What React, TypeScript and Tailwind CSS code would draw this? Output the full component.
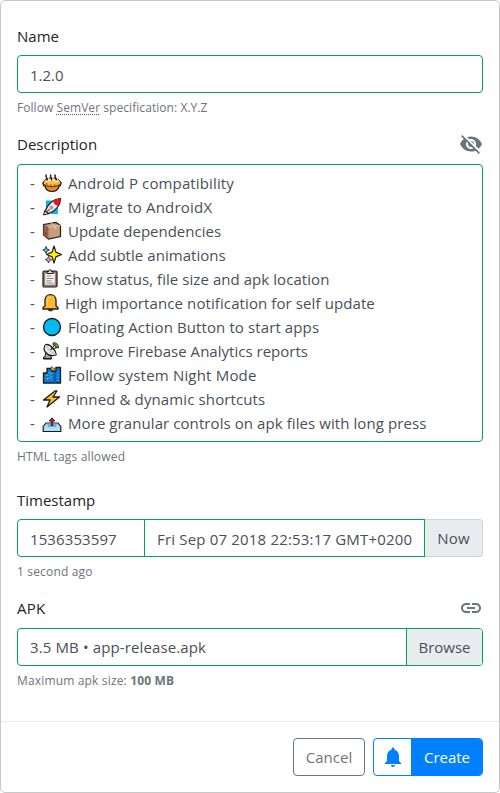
import React from 'react';

const O = '#1c1c1c';

const Pie = () => (
  <>
    <path d="M1 9.500h18c.3 2.500-.8 3.500-2 4-1 3.500-3.500 5-7 5s-6-1.500-7-5C1.800 13 .7 12 1 9.500z" fill="#f08518" stroke={O} strokeWidth="1.200" />
    <path d="M1.300 10.500C1.500 6.500 5 5 10 5s8.500 1.500 8.700 5.500c-2 4-15.400 4-17.400 0z" fill="#ffc23d" stroke={O} strokeWidth=".9" />
    <path d="M4 8.500c3-2 9-2 12 0" fill="none" stroke="#fff0c0" strokeWidth="2" />
    <path d="M4 11h1.500M8 12h1.500M12 12h1.500M15.500 11h.8" stroke="#d8421c" strokeWidth="1.400" />
    <path d="M5 7.500c1-2-1.800-3-.8-6M9.500 7.500c1-2-1.800-3-.8-6M14 7.500c1-2-1.800-3-.8-6" fill="none" stroke={O} strokeWidth="1.500" />
    <path d="M6.500 6.500c.6-1.500-1.300-2.500-.6-4.500M11 6.500c.6-1.500-1.300-2.500-.6-4.500M15.500 6.500c.6-1.500-1.300-2.500-.6-4.500" stroke="#fff" fill="none" strokeWidth="1" />
  </>
);

const RocketArt = () => (
  <>
    <path d="M4 3.500h8L16 8v9H9L4 11z" fill="#08b5ef" />
    <path d="M1.500 18L3 13l4.500 3.500z" fill="#d9d9d9" stroke={O} />
    <path d="M3.500 14C4.500 9 10.500 2 18.500 1.500 18.500 9 12.500 14.500 6.500 16.500z" fill="#efefef" stroke={O} strokeWidth="1.200" />
    <path d="M11.200 4.200c2.200-1.600 4.600-2.500 7.300-2.700-.1 2.800-1.100 5.200-2.900 7.300-2.200-.6-3.800-2.200-4.400-4.600z" fill="#e81123" />
    <circle cx="9.500" cy="10.500" r="1.500" fill="#aaa" stroke="#777" strokeWidth=".6" />
    <path d="M5 14.800l2.800-2.800" stroke="#e8401c" strokeWidth="1.400" />
  </>
);

const Box = () => (
  <>
    <path d="M1.500 3.500L14 1.500l4.500 3v11L6.500 18 1.500 14z" fill="#c69c7b" stroke={O} strokeWidth="1.200" />
    <path d="M1.500 3.500l5 2.500v12l-5-4z" fill="#8e6548" />
    <path d="M6.500 6l12-1.500" stroke="#e6c5a8" />
    <path d="M8 2.600l4.300 2.600v3l2-.3V5l-4-2.700z" fill="#d6bda8" />
    <path d="M3 11l1.500 1.200v2L3 13z" fill="#e81123" />
    <path d="M12 14.500l4-1v1.500l-4 1z" fill="#b0a69d" />
  </>
);

const Sparkles = () => (
  <>
    <path d="M12 1l1.900 6.100 5.600 2.400-5.600 2.400L12 18l-1.900-6.100-5.600-2.400 5.600-2.400z" fill="#fff100" stroke={O} strokeWidth="1.200" strokeLinejoin="round" />
    <path d="M4 1.500l1 2.500 2.500 1L5 6 4 8.500 3 6 .8 5 3 4z" fill="#35cdf5" stroke={O} strokeWidth=".8" />
    <path d="M6.500 11.500l1 2.200 2.200 1-2.200 1-1 2.300-1-2.300-2.200-1 2.200-1z" fill="#f4a0d5" stroke={O} strokeWidth=".8" />
  </>
);

const Clipboard = () => (
  <>
    <rect x="1" y="2" width="14" height="16" rx="1.200" fill="#a97b5a" stroke={O} strokeWidth="1.200" />
    <path d="M2.800 4h10.400v12H2.800z" fill="#f2f2f2" stroke="#666" strokeWidth=".5" />
    <path d="M5 4.500v-2h1.700C7 0 9 0 9.300 2.500H11v2z" fill="#ddd" stroke={O} />
    <path d="M4.500 7h4.500M4.500 9.500h7M4.500 11.800h5M4.500 14h7" stroke="#8c8c8c" />
  </>
);

const BellArt = () => (
  <>
    <path d="M6.500 15.500c0 3 4 3 4 0" fill="#f9a52b" stroke={O} strokeWidth="1.200" />
    <path d="M3 13V7.500C3 4 5.500 1.700 8.500 1.700S14 4 14 7.500V13l2 1.500V16H1v-1.500z" fill="#ffb92e" stroke={O} strokeWidth="1.300" strokeLinejoin="round" />
    <path d="M5 12V8c0-2 1-3.500 2.500-4" fill="none" stroke="#ffd36b" />
  </>
);

const Circle = () => <circle cx="10" cy="10" r="8.500" fill="#00bcf2" stroke={O} strokeWidth="1.300" />;

const Satellite = () => (
  <>
    <path d="M11 2c3-1 6 1.500 5.500 5l-3-.5c0-1.500-.7-2.300-2.500-2.500z" fill="#719828" stroke={O} strokeWidth=".8" />
    <path d="M4 11l4.500 2 1 5h-8v-2H3z" fill="#a9a9a9" stroke={O} />
    <path d="M3.500 3.500C-.5 9 5 16.500 14 14c.8-3-5-11.500-10.500-10.500z" fill="#e3e3e3" stroke={O} strokeWidth="1.200" />
    <path d="M3.500 3.500C6 8 9.500 12 14 14" fill="none" stroke="#aaa" strokeWidth=".8" />
    <path d="M8.500 8.500l5-5M8.500 8.500l6.500-2" stroke={O} />
    <path d="M1.500 17.500H10" stroke={O} strokeWidth="1.200" />
  </>
);

const NightCity = () => (
  <>
    <path d="M1.500 18V8H5V3.500h5V6h4V2.500h4.500V18z" fill="#0879d5" stroke={O} strokeWidth="1.300" />
    <path d="M12 7h2v11h-3z" fill="#075ea8" />
    <path d="M10 1.500c0 1.500 1.200 2.300 3 1.500.5 2-1.500 3-3 2.300-1.300-.8-1.300-2.800 0-3.800z" fill="#f5d232" stroke={O} strokeWidth=".7" />
    <path d="M4 10v6M7 7v9M10 8v7M16 6v10" stroke="#41c7ef" strokeWidth="1" strokeDasharray="1 2" />
    <path d="M5.500 9.500v7M8.500 8v8" stroke="#f7cd35" strokeWidth="1" strokeDasharray="1 3" />
  </>
);

const Bolt = () => <path d="M13 2L1.500 11H8l-3 7L17.500 8H11l4-6z" fill="#ffb92e" stroke={O} strokeWidth="1.300" strokeLinejoin="round" />;

const Outbox = () => (
  <>
    <path d="M1.200 13.500l2.800-3.500h12l2.800 3.500v5H1.200z" fill="#a9d8f5" stroke={O} strokeWidth="1.200" />
    <path d="M5 10.600h10l-1.200 3.400H6.200z" fill="#62b0e4" />
    <path d="M2 13.700h4c.8 1.800 7.200 1.800 8 0h4v4.200H2z" fill="#b4def6" />
    <path d="M10 13V8" stroke={O} strokeWidth="2.200" />
    <path d="M7.200 8L10 4.800 12.800 8z" fill="#dc1721" stroke={O} strokeWidth=".9" />
    <path d="M10 12.500V7" stroke="#dc1721" strokeWidth="1.200" />
  </>
);

const changes = [
  { art: Pie, gap: 'pl-[26px]', track: 'tracking-[0.13px]', text: 'Android P compatibility' },
  { art: RocketArt, gap: 'pl-[26px]', track: 'tracking-[0.2px]', text: 'Migrate to AndroidX' },
  { art: Box, gap: 'pl-[26px]', track: 'tracking-[0px]', text: 'Update dependencies' },
  { art: Sparkles, gap: 'pl-[26px]', track: 'tracking-[0.05px]', text: 'Add subtle animations' },
  { art: Clipboard, gap: 'pl-[22px]', track: 'tracking-[0.06px]', text: 'Show status, file size and apk location' },
  { art: BellArt, gap: 'pl-[23px]', track: 'tracking-[0.1px]', text: 'High importance notification for self update' },
  { art: Circle, gap: 'pl-[26px]', track: 'tracking-[0.11px]', text: 'Floating Action Button to start apps' },
  { art: Satellite, gap: 'pl-[23px]', track: 'tracking-[0.02px]', text: 'Improve Firebase Analytics reports' },
  { art: NightCity, gap: 'pl-[26px]', track: 'tracking-[0.19px]', text: 'Follow system Night Mode' },
  { art: Bolt, gap: 'pl-[24px]', track: 'tracking-[0.12px]', text: 'Pinned & dynamic shortcuts' },
  { art: Outbox, gap: 'pl-[26px]', track: 'tracking-[0.08px]', text: 'More granular controls on apk files with long press' },
];

export default function App() {
  return (
    <div className="h-[793px] w-[500px] bg-white font-['Open_Sans',sans-serif] text-[15px] leading-6 text-[#212529]">
      <form className="flex h-full flex-col rounded-[5px] border border-[#c8c8c8] whitespace-nowrap">
        <div className="flex-1 px-4 pt-[23px]">
          <div>
            <label className="block">Name</label>
            <div className="mt-[7px] flex h-[38px] items-center rounded border border-[#00a651] px-3 pt-[2px] text-[#495057]">1.2.0</div>
            <small className="mt-[5px] block text-[12px] leading-[19px] tracking-[0.06px] text-[#6c757d]">
              Follow <abbr className="underline decoration-dotted underline-offset-2">SemVer</abbr> specification: X.Y.Z
            </small>
          </div>
          <div className="mt-[15px]">
            <div className="flex items-center justify-between">
              <label>Description</label>
              <svg viewBox="0 0 24 24" className="h-6 w-6" fill="#6c757d">
                <path d="M12 7c2.760 0 5 2.240 5 5 0 .65-.13 1.260-.36 1.830l2.920 2.920c1.510-1.260 2.700-2.890 3.430-4.750-1.730-4.390-6-7.500-11-7.500-1.400 0-2.740.25-3.980.7l2.160 2.160C10.740 7.130 11.350 7 12 7zM2 4.270l2.280 2.280.46.46C3.080 8.300 1.780 10.020 1 12c1.730 4.390 6 7.500 11 7.500 1.550 0 3.030-.3 4.380-.84l.42.42L19.730 22 21 20.730 3.270 3 2 4.270zM7.530 9.800l1.550 1.550c-.05.21-.08.43-.08.65 0 1.660 1.340 3 3 3 .22 0 .44-.03.65-.08l1.550 1.550c-.67.33-1.410.53-2.200.53-2.760 0-5-2.240-5-5 0-.79.2-1.530.53-2.200zm4.310-.78l3.150 3.150.02-.16c0-1.660-1.340-3-3-3l-.17.01z" />
              </svg>
            </div>
            <div className="mt-2 h-[278px] rounded border border-[#00a651] px-3 pt-[6px] text-[#495057]">
              {changes.map(({ art: Art, gap, track, text }) => (
                <div key={text} className="flex h-6 items-center">
                  <span className="w-3">-</span>
                  <svg viewBox="0 0 20 20" className="-mr-5 h-5 w-5 shrink-0"><Art /></svg>
                  <span className={`${gap} ${track}`}>{text}</span>
                </div>
              ))}
            </div>
            <small className="mt-[5px] block text-[12px] leading-[19px] tracking-[0.17px] text-[#6c757d]">HTML tags allowed</small>
          </div>
          <div className="mt-[22px]">
            <label className="block">Timestamp</label>
            <div className="mt-[7px] flex h-[38px] text-[#495057]">
              <div className="flex w-[128px] items-center rounded-l border border-[#00a651] px-3 pt-[1px] tracking-[0.1px]">1536353597</div>
              <div className="-ml-px flex w-[281px] items-center border border-[#00a651] px-3 pt-[1px] tracking-[0.18px]">Fri Sep 07 2018 22:53:17 GMT+0200</div>
              <div className="flex flex-1 items-center justify-center rounded-r border border-l-0 border-[#ced4da] bg-[#e9ecef] tracking-[0.2px]">Now</div>
            </div>
            <small className="mt-[5px] block text-[12px] leading-[19px] tracking-[0.17px] text-[#6c757d]">1 second ago</small>
          </div>
          <div className="mt-[15px]">
            <div className="flex items-center justify-between">
              <label className="tracking-[0.3px]">APK</label>
              <svg viewBox="0 0 24 24" className="h-6 w-6" fill="#6c757d">
                <path d="M3.900 12c0-1.710 1.390-3.100 3.100-3.100h4V7H7c-2.760 0-5 2.240-5 5s2.240 5 5 5h4v-1.900H7c-1.710 0-3.100-1.390-3.100-3.100zM8 13h8v-2H8v2zm9-6h-4v1.900h4c1.710 0 3.100 1.390 3.100 3.100s-1.390 3.100-3.100 3.100h-4V17h4c2.760 0 5-2.240 5-5s-2.240-5-5-5z" />
              </svg>
            </div>
            <div className="mt-2 flex h-[38px] overflow-hidden rounded border border-[#00a651] text-[#495057]">
              <div className="flex flex-1 items-center px-3 tracking-[0.12px]">3.5 MB • app-release.apk</div>
              <div className="flex w-[76px] items-center justify-center border-l border-[#00a651] bg-[#e9ecef]">Browse</div>
            </div>
            <small className="mt-[5px] block text-[12px] leading-[19px] tracking-[0.16px] text-[#6c757d]">
              Maximum apk size: <b>100 MB</b>
            </small>
          </div>
        </div>
        <div className="flex h-[71px] justify-end gap-2 border-t border-[#e9ecef] px-4 pt-4">
          <button type="button" className="h-[38px] w-[72px] rounded border border-[#6c757d] text-[#6c757d]">Cancel</button>
          <div className="flex h-[38px] w-[110px] overflow-hidden rounded border border-[#0080ff]">
            <button type="button" className="flex w-[37px] items-center justify-center">
              <svg viewBox="0 0 24 24" className="h-6 w-6" fill="#0080ff">
                <path d="M12 22c1.100 0 2-.9 2-2h-4c0 1.100.89 2 2 2zm6-6v-5c0-3.070-1.640-5.640-4.500-6.320V4c0-.83-.67-1.500-1.500-1.500s-1.500.67-1.500 1.500v.68C7.630 5.360 6 7.920 6 11v5l-2 2v1h16v-1l-2-2z" />
              </svg>
            </button>
            <button type="button" className="flex-1 bg-[#0080ff] pl-px text-white">Create</button>
          </div>
        </div>
      </form>
    </div>
  );
}
